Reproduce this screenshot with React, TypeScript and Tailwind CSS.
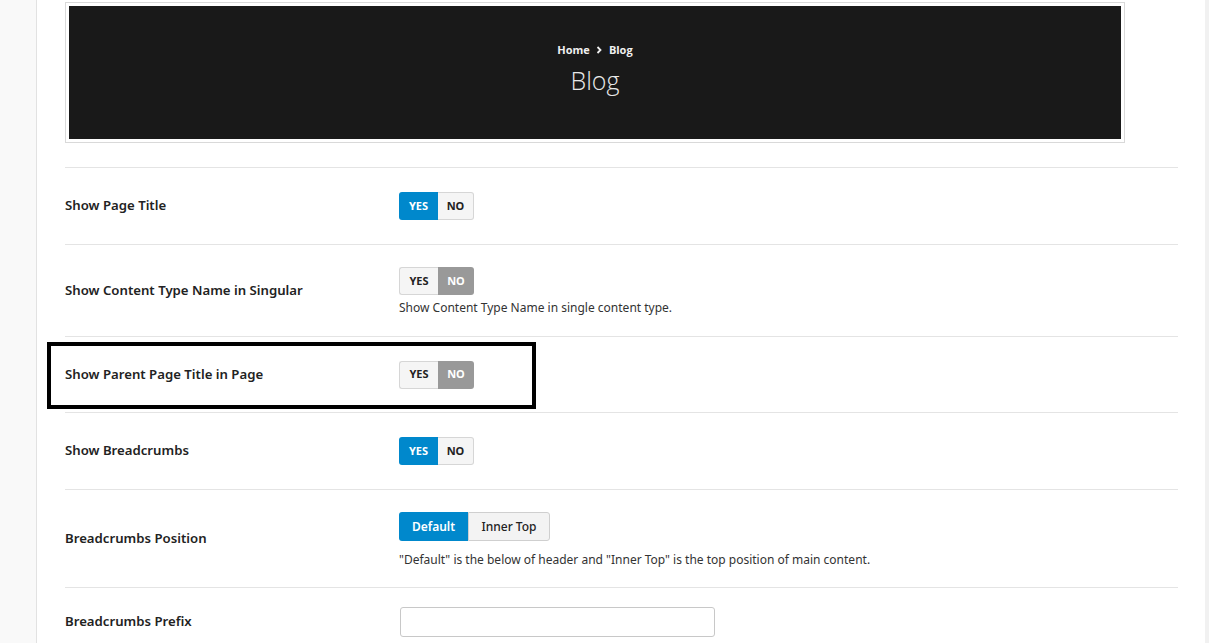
import React from "react";

const font = { fontFamily: '"Noto Sans", "Open Sans", sans-serif' };

function YesNo({ yes }: { yes: boolean }) {
  return (
    <div className="flex h-[28px] w-[75px] text-[11px] font-bold">
      <div
        className={
          yes
            ? "flex w-[39px] items-center justify-center rounded-l-[3px] bg-[#0088cc] text-white"
            : "flex w-[39px] items-center justify-center rounded-l-[3px] border border-r-0 border-[#d6d6d6] bg-[#f5f5f5] text-[#222]"
        }
      >
        YES
      </div>
      <div
        className={
          yes
            ? "flex w-[36px] items-center justify-center rounded-r-[3px] border border-l-0 border-[#d6d6d6] bg-[#f5f5f5] text-[#222]"
            : "flex w-[36px] items-center justify-center rounded-r-[3px] bg-[#999999] text-white"
        }
      >
        NO
      </div>
    </div>
  );
}

function Row({
  label,
  children,
  h,
  top,
  last,
}: {
  label: string;
  children: React.ReactNode;
  h: string;
  top?: string;
  last?: boolean;
}) {
  return (
    <div className={`flex ${last ? "" : "border-b border-[#e4e4e4]"} ${h}`}>
      <div className="flex w-[334px] shrink-0 items-center text-[13.2px] font-semibold text-[#222]">
        {label}
      </div>
      <div className={`flex flex-col ${top ? top : "justify-center"}`}>{children}</div>
    </div>
  );
}

export default function App() {
  return (
    <div className="flex h-[643px] w-[1209px] overflow-hidden bg-white" style={font}>
      <div className="w-[37px] shrink-0 border-r border-[#e2e2e2] bg-[#f9f9f9]" />
      <div className="relative flex-1 pl-[28px]">
        <div className="w-[1113px]">
          <div className="mt-[2px] w-[1060px] border border-[#d9d9d9] p-[3px]">
            <div className="flex h-[133px] flex-col items-center bg-[#191919] pt-[36px]">
              <div
                className="flex items-center gap-[6px] text-[11px] font-bold text-[#f0f0f0]"
                style={{ fontFamily: '"Open Sans", sans-serif' }}
              >
                <span>Home</span>
                <svg width="7" height="8" viewBox="0 0 7 8">
                  <path d="M1.5 1 L4.5 4 L1.5 7" stroke="#f0f0f0" strokeWidth="1.8" fill="none" />
                </svg>
                <span>Blog</span>
              </div>
              <div
                className="mt-[3px] text-[25px] font-light leading-[36px] text-[#e8e8e8]"
                style={{ fontFamily: '"Open Sans", sans-serif' }}
              >
                Blog
              </div>
            </div>
          </div>
          <div className="h-[25px] border-b border-[#e4e4e4]" />
          <Row label="Show Page Title" h="h-[77px]">
            <YesNo yes />
          </Row>
          <Row label="Show Content Type Name in Singular" h="h-[92px]" top="pt-[22px]">
            <YesNo yes={false} />
            <div className="mt-[5px] text-[12px] leading-[16px] text-[#333]">
              Show Content Type Name in single content type.
            </div>
          </Row>
          <Row label="Show Parent Page Title in Page" h="h-[76px]">
            <YesNo yes={false} />
          </Row>
          <Row label="Show Breadcrumbs" h="h-[77px]">
            <YesNo yes />
          </Row>
          <Row label="Breadcrumbs Position" h="h-[98px]" top="pt-[22px]">
            <div className="flex h-[29px] text-[12px] font-medium">
              <div className="flex w-[69px] items-center justify-center rounded-l-[3px] bg-[#0088cc] font-semibold text-white">
                Default
              </div>
              <div className="flex w-[82px] items-center justify-center rounded-r-[3px] border border-[#cfcfcf] bg-[#f3f3f3] text-[#222]">
                Inner Top
              </div>
            </div>
            <div className="mt-[11px] text-[12px] leading-[16px] text-[#333]">
              "Default" is the below of header and "Inner Top" is the top position of main content.
            </div>
          </Row>
          <Row label="Breadcrumbs Prefix" h="h-[68px]" last>
            <div className="ml-[1px] h-[30px] w-[315px] rounded-[3px] border border-[#c8c8c8] bg-white" />
          </Row>
        </div>
        <div className="pointer-events-none absolute left-[10px] top-[342px] h-[67px] w-[489px] border-[4px] border-black" />
      </div>
      <div className="w-[4px] shrink-0 bg-[#f1f1f1]" />
    </div>
  );
}
